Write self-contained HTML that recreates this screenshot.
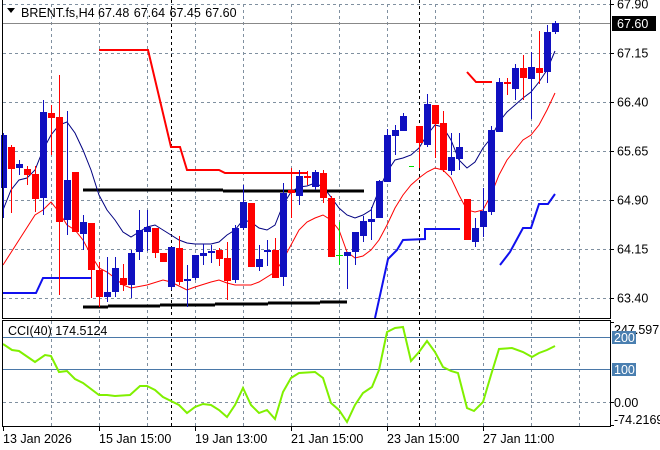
<!DOCTYPE html>
<html><head><meta charset="utf-8"><style>
html,body{margin:0;padding:0;background:#fff;width:660px;height:450px;overflow:hidden}
svg{display:block;font-family:"Liberation Sans",sans-serif;font-size:12.5px}
</style></head><body>
<svg width="660" height="450" viewBox="0 0 660 450" xmlns="http://www.w3.org/2000/svg">
<rect width="660" height="450" fill="#fff"/>
<g stroke="#8090a0" stroke-width="1" stroke-dasharray="3,3" shape-rendering="crispEdges">
<path d="M51.5 4V318M99.5 4V318M147.5 4V318M195.5 4V318M243.5 4V318M291.5 4V318M339.5 4V318M387.5 4V318M435.5 4V318M483.5 4V318M531.5 4V318M579.5 4V318"/>
<path d="M51.5 321V426M99.5 321V426M147.5 321V426M195.5 321V426M243.5 321V426M291.5 321V426M339.5 321V426M387.5 321V426M435.5 321V426M483.5 321V426M531.5 321V426M579.5 321V426"/>
<path d="M3 4.5H610M3 53.5H610M3 102.5H610M3 151.5H610M3 200.5H610M3 249.5H610M3 298.5H610M3 402.5H610"/>
</g>
<g stroke="#000" stroke-dasharray="3,3" shape-rendering="crispEdges"><path d="M171.5 0V318M171.5 321V426M419.5 0V318M419.5 321V426"/></g>
<path d="M3 23.5H610" stroke="#888" shape-rendering="crispEdges"/>
<path d="M3 337.5H610M3 369.5H610" stroke="#4a78a8" shape-rendering="crispEdges"/>
<g stroke="#000" stroke-width="3" fill="none"><path d="M83 190H223M223 191H364"/><path d="M83 307H108M108 306H160M160 305H215M215 304H268M268 303H320M320 302H347"/></g>
<g stroke="#1010ee" stroke-width="2" fill="none"><path d="M3 293H36L43 278H92"/><path d="M375 318L388 259L397 250L403 240L425 239L425 229H460"/><path d="M500 265L510 252L523 228H531L539 204H548L555 194"/></g>
<g stroke="#ff0000" stroke-width="2" fill="none"><path d="M99 50H148L171 147H180L187 170H219L225 173H307"/><path d="M467 72L476 82H492"/></g>
<polyline fill="none" stroke="#000080" stroke-width="1" points="3,210 11,190 19,180 27,178 35,170 43,150 51,135 59,125 67,122 75,133 83,150 91,170 99,195 107,210 115,220 123,232 131,237 139,232 147,227 155,225 163,230 171,235 179,240 187,243 195,244 203,244 211,244 219,242 227,235 235,230 243,220 251,222 259,228 267,230 275,225 283,205 291,192 299,187 307,186 315,183 323,187 331,197 339,208 347,215 355,218 363,215 371,210 379,190 387,172 395,160 403,158 411,155 419,148 427,135 435,125 443,127 451,140 459,160 467,168 475,162 483,148 491,138 499,122 507,112 515,105 523,98 531,92 539,82 547,70 555,51"/>
<polyline fill="none" stroke="#ff0000" stroke-width="1" points="3,265 19,240 35,215 43,210 51,202 59,212 67,225 75,230 83,240 91,255 99,268 107,272 115,278 123,285 131,288 147,285 163,280 171,282 179,286 187,290 195,287 211,282 219,280 227,283 235,285 251,285 259,282 275,272 283,260 291,245 299,230 307,222 315,218 323,215 331,220 339,230 347,252 355,258 363,256 371,250 379,240 387,225 395,208 403,195 411,185 419,178 427,172 435,168 443,170 451,178 459,195 467,210 475,212 483,210 491,195 499,175 507,160 515,150 523,140 531,135 539,125 547,110 555,93"/>
<g shape-rendering="crispEdges">
<path stroke="#ff0000" d="M11.5 145V213M27.5 166V185M35.5 166V212M51.5 105V155M59.5 75V295M75.5 172V232M91.5 223V298M99.5 262V307M123.5 264V291M155.5 228V258M163.5 253V262M179.5 236V285M219.5 248V266M227.5 242V300M251.5 203V267M275.5 238V278M291.5 168V218M307.5 171V185M323.5 170V203M331.5 196V257M419.5 126V168M435.5 105V158M443.5 111V172M467.5 199V240M507.5 78V95M523.5 55V100M539.5 31V84"/>
<g fill="#ff0000">
<rect x="8" y="147" width="7" height="22"/><rect x="24" y="169" width="7" height="6"/><rect x="32" y="174" width="7" height="25"/><rect x="48" y="113" width="7" height="5"/><rect x="56" y="117" width="7" height="105"/><rect x="72" y="172" width="7" height="60"/><rect x="88" y="223" width="7" height="47"/><rect x="96" y="270" width="7" height="27"/><rect x="120" y="278" width="7" height="7"/><rect x="152" y="228" width="7" height="25"/><rect x="160" y="253" width="7" height="9"/><rect x="176" y="248" width="7" height="34"/><rect x="216" y="250" width="7" height="9"/><rect x="224" y="258" width="7" height="23"/><rect x="248" y="203" width="7" height="64"/><rect x="272" y="250" width="7" height="28"/><rect x="288" y="190" width="7" height="3"/><rect x="304" y="176" width="7" height="2"/><rect x="320" y="173" width="7" height="25"/><rect x="328" y="198" width="7" height="59"/><rect x="416" y="126" width="7" height="17"/><rect x="432" y="105" width="7" height="19"/><rect x="440" y="123" width="7" height="47"/><rect x="464" y="199" width="7" height="41"/><rect x="504" y="82" width="7" height="2"/><rect x="520" y="68" width="7" height="10"/><rect x="536" y="68" width="7" height="5"/>
</g>
<path stroke="#1010c0" d="M3.5 133V218M19.5 160V175M43.5 100V215M67.5 111V235M83.5 215V250M107.5 257V302M115.5 257V297M131.5 250V298M139.5 210V260M147.5 210V251M171.5 247V290M187.5 265V307M195.5 255V280M203.5 244V265M211.5 245V263M235.5 225V283M243.5 185V230M259.5 245V271M267.5 240V266M283.5 183V286M299.5 170V205M315.5 170V190M347.5 252V289M355.5 232V265M363.5 216V242M371.5 207V240M379.5 180V218M387.5 129V182M395.5 125V155M403.5 113V131M427.5 94V147M451.5 133V175M459.5 133V170M475.5 218V247M483.5 188V237M491.5 126V215M499.5 78V132M515.5 64V100M531.5 52V119M547.5 25V83M555.5 21V34"/>
<g fill="#1010c0">
<rect x="1" y="135" width="6" height="53"/><rect x="16" y="164" width="7" height="4"/><rect x="40" y="112" width="7" height="86"/><rect x="64" y="180" width="7" height="40"/><rect x="80" y="222" width="7" height="12"/><rect x="104" y="292" width="7" height="5"/><rect x="112" y="268" width="7" height="24"/><rect x="128" y="253" width="7" height="32"/><rect x="136" y="230" width="7" height="22"/><rect x="144" y="227" width="7" height="5"/><rect x="168" y="247" width="7" height="40"/><rect x="184" y="279" width="7" height="2"/><rect x="192" y="255" width="7" height="23"/><rect x="200" y="253" width="7" height="3"/><rect x="208" y="251" width="7" height="2"/><rect x="232" y="228" width="7" height="52"/><rect x="240" y="202" width="7" height="26"/><rect x="256" y="259" width="7" height="8"/><rect x="264" y="250" width="7" height="2"/><rect x="280" y="193" width="7" height="84"/><rect x="296" y="176" width="7" height="20"/><rect x="312" y="172" width="7" height="15"/><rect x="344" y="252" width="7" height="4"/><rect x="352" y="232" width="7" height="20"/><rect x="360" y="221" width="7" height="15"/><rect x="368" y="219" width="7" height="3"/><rect x="376" y="181" width="7" height="37"/><rect x="384" y="135" width="7" height="47"/><rect x="392" y="130" width="7" height="6"/><rect x="400" y="116" width="7" height="15"/><rect x="424" y="104" width="7" height="41"/><rect x="448" y="157" width="7" height="14"/><rect x="456" y="147" width="7" height="12"/><rect x="472" y="228" width="7" height="14"/><rect x="480" y="211" width="7" height="16"/><rect x="488" y="130" width="7" height="82"/><rect x="496" y="82" width="7" height="50"/><rect x="512" y="68" width="7" height="21"/><rect x="528" y="67" width="7" height="12"/><rect x="544" y="32" width="7" height="40"/><rect x="552" y="23" width="7" height="9"/>
</g>
<path stroke="#00dd00" d="M339.5 222V265M336 255.5H343M409 166.5H414"/>
</g>
<polyline fill="none" stroke="#80f000" stroke-width="2" points="3,344 12,350 19,351 35,362 45,355 51,356 59,372 67,371 75,379 83,383 99,395 107,395 115,396 130,395 140,386 147,386 155,390 163,397 171,401 179,405 187,413 195,407 203,404 211,405 219,410 227,417 235,405 243,388 251,405 259,413 267,410 275,419 283,392 291,378 299,373 315,372 323,378 331,403 339,410 347,422 355,405 363,393 372,387 379,370 387,332 395,328 403,327 411,361 419,352 427,341 435,352 443,367 451,371 458,373 467,408 474,411 483,402 491,375 499,349 512,348 523,352 532,357 539,353 547,350 555,346"/>
<g fill="none" stroke="#000" shape-rendering="crispEdges">
<path d="M2.5 0V318.5H610.5V0"/>
<path d="M2.5 320.5H610.5V426.5H2.5Z"/>
<path d="M610 4.5H614M610 53.5H614M610 102.5H614M610 151.5H614M610 200.5H614M610 249.5H614M610 298.5H614M610 402.5H614M610 322.5H614M610 425.5H614"/>
<path d="M3.5 427V431M99.5 427V431M195.5 427V431M291.5 427V431M387.5 427V431M483.5 427V431"/>
</g>
<path d="M7 8H15L11 13Z" fill="#000"/>
<text x="21" y="17" fill="#000">BRENT.fs,H4</text>
<text x="98" y="17" fill="#000" word-spacing="1">67.48 67.64 67.45 67.60</text>
<g fill="#000">
<text x="617" y="8.5">67.90</text>
<text x="617" y="57.5">67.15</text>
<text x="617" y="106.5">66.40</text>
<text x="617" y="155.5">65.65</text>
<text x="617" y="204.5">64.90</text>
<text x="617" y="253.5">64.15</text>
<text x="617" y="302.5">63.40</text>
</g>
<rect x="612" y="16" width="44" height="15" fill="#000"/>
<text x="617" y="28" fill="#fff">67.60</text>
<text x="8" y="335" fill="#000">CCI(40) 174.5124</text>
<text x="614" y="334" fill="#000">247.597</text>
<rect x="612" y="331" width="24" height="13" fill="#4a7fb0"/>
<text x="614" y="342" fill="#fff">200</text>
<rect x="612" y="363" width="24" height="13" fill="#4a7fb0"/>
<text x="614" y="374" fill="#fff">100</text>
<text x="614" y="407" fill="#000">0.00</text>
<text x="614" y="424" fill="#000">-74.2169</text>
<g fill="#000">
<text x="3" y="443">13 Jan 2026</text>
<text x="99" y="443">15 Jan 15:00</text>
<text x="195" y="443">19 Jan 13:00</text>
<text x="291" y="443">21 Jan 15:00</text>
<text x="387" y="443">23 Jan 15:00</text>
<text x="483" y="443">27 Jan 11:00</text>
</g>
</svg>
</body></html>
